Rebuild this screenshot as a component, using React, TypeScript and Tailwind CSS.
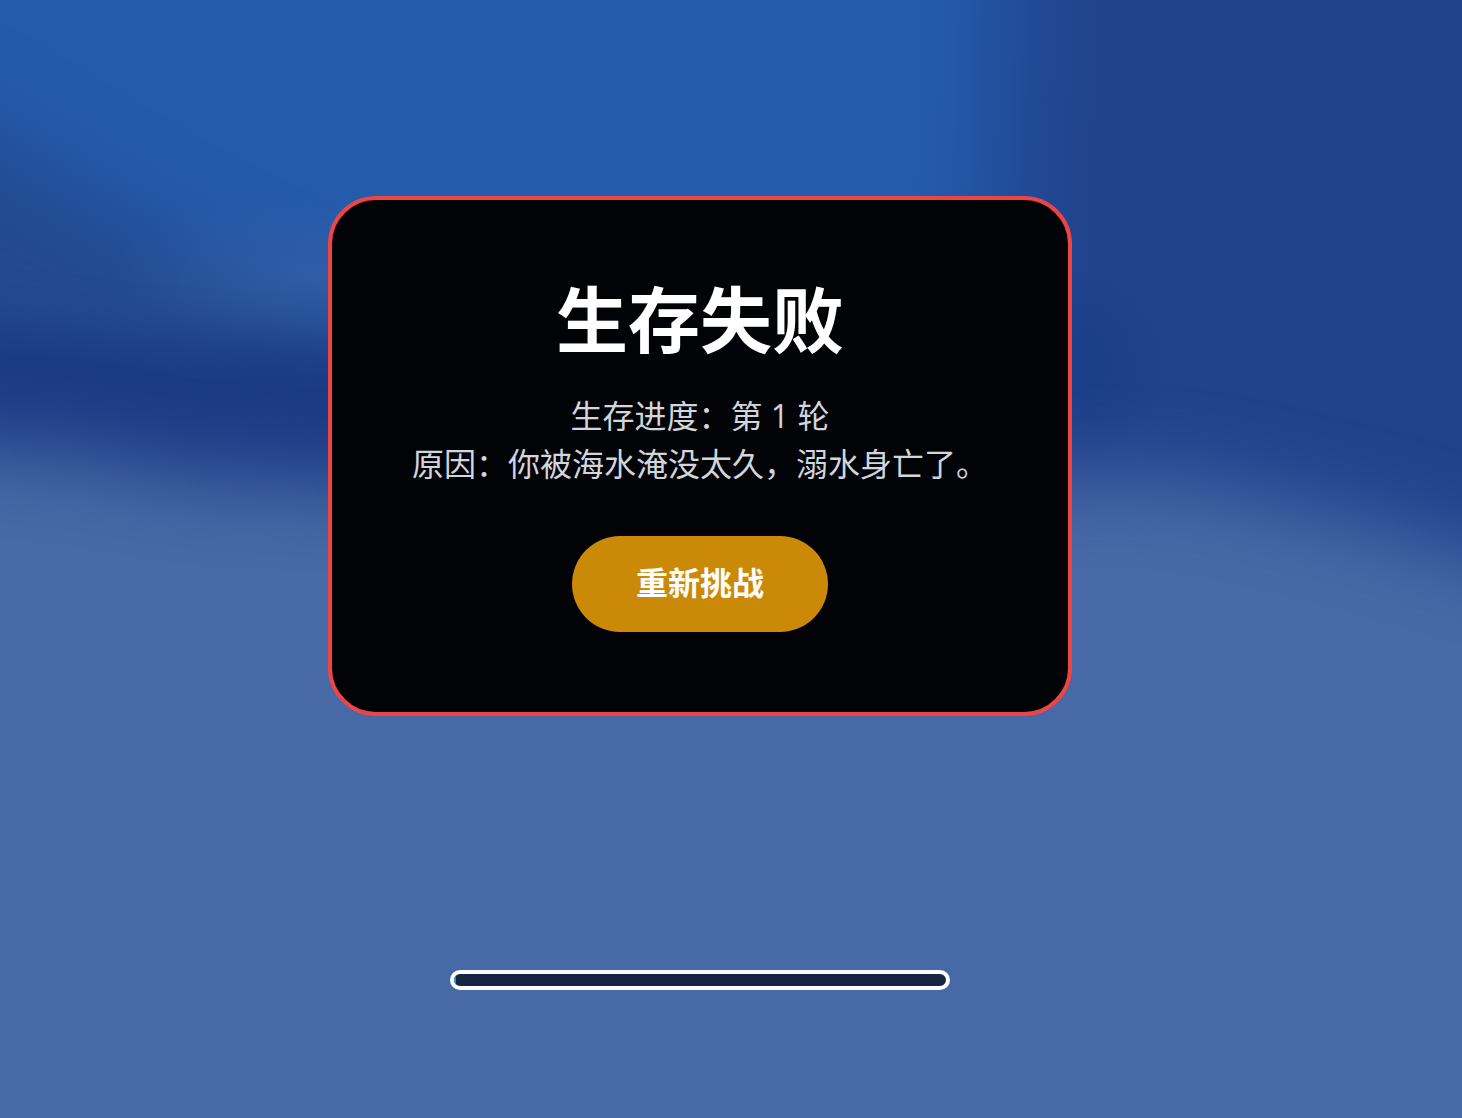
function Backdrop() {
  return (
    <svg
      className="absolute inset-0 h-full w-full"
      viewBox="0 0 1462 1118"
      preserveAspectRatio="none"
      aria-hidden="true"
    >
      <defs>
        <filter id="soft" x="-20%" y="-20%" width="140%" height="140%" colorInterpolationFilters="sRGB">
          <feGaussianBlur stdDeviation="40" />
        </filter>
        <filter id="crisp" x="-20%" y="-20%" width="140%" height="140%" colorInterpolationFilters="sRGB">
          <feGaussianBlur stdDeviation="24" />
        </filter>
        <linearGradient id="wall" x1="920" x2="1100" y1="0" y2="6" gradientUnits="userSpaceOnUse">
          <stop offset="0" stopColor="#245bab" />
          <stop offset="0.2" stopColor="#2358a7" />
          <stop offset="0.45" stopColor="#22509c" />
          <stop offset="0.7" stopColor="#214893" />
          <stop offset="1" stopColor="#22428d" />
        </linearGradient>
        <radialGradient id="haze">
          <stop offset="0" stopColor="#3c62a6" stopOpacity="0.5" />
          <stop offset="1" stopColor="#3c62a6" stopOpacity="0" />
        </radialGradient>
        <radialGradient id="shade">
          <stop offset="0" stopColor="#173c85" stopOpacity="0.9" />
          <stop offset="1" stopColor="#173c85" stopOpacity="0" />
        </radialGradient>
      </defs>
      <rect width="1462" height="1118" fill="url(#wall)" />
      <path
        filter="url(#soft)"
        d="M-200 20 L0 138 L170 238 L330 310 L800 310 L960 290 L1000 700 L-200 700Z"
        fill="#234a91"
      />
      <ellipse cx="310" cy="275" rx="200" ry="85" fill="url(#haze)" />
      <path
        filter="url(#crisp)"
        d="M-200 316 L0 324 L170 344 L330 350 L800 350 L980 330 L1000 700 L-200 700Z"
        fill="#1c3a85"
      />
      <ellipse cx="1060" cy="365" rx="110" ry="100" fill="url(#shade)" />
      <path
        filter="url(#soft)"
        d="M-200 442 L0 448 L80 455 L180 475 L330 484 L900 500 L1080 478 L1180 480 L1270 500 L1380 526 L1462 552 L1700 612 L1700 1400 L-200 1400Z"
        fill="#4769a5"
      />
    </svg>
  );
}

function BreathBar({ value }: { value: number }) {
  return (
    <div
      role="progressbar"
      aria-label="氧气"
      aria-valuenow={value}
      aria-valuemin={0}
      aria-valuemax={100}
      className="h-5 w-[500px] max-w-full overflow-hidden rounded-[10px] border-4 border-white bg-[#192541]"
    >
      <div className="h-full bg-sky-500" style={{ width: value + "%" }} />
    </div>
  );
}

export default function App() {
  return (
    <main className="relative min-h-screen overflow-hidden bg-[#4769a5] font-['Inter','Noto_Sans_CJK_SC',sans-serif]">
      <Backdrop />
      <div className="relative flex flex-col items-center gap-[254px] pt-[196px] pr-[62px] pb-32">
        <section className="rounded-[48px] border-4 border-[#ef4444] bg-[#020306] p-20 text-center">
          <h1 className="mb-[30px] text-7xl leading-[82px] font-bold text-white">生存失败</h1>
          <p className="mb-12 font-['Open_Sans','Noto_Sans_CJK_SC',sans-serif] text-[32px] leading-[48px] text-gray-300">
            生存进度：第 1 轮
            <br />
            原因：你被海水淹没太久，溺水身亡了。
          </p>
          <button
            type="button"
            className="h-24 cursor-pointer rounded-full bg-[#ca8a08] px-16 text-[32px] leading-[48px] font-bold text-white hover:bg-yellow-500"
          >
            重新挑战
          </button>
        </section>
        <BreathBar value={0.4} />
      </div>
    </main>
  );
}
